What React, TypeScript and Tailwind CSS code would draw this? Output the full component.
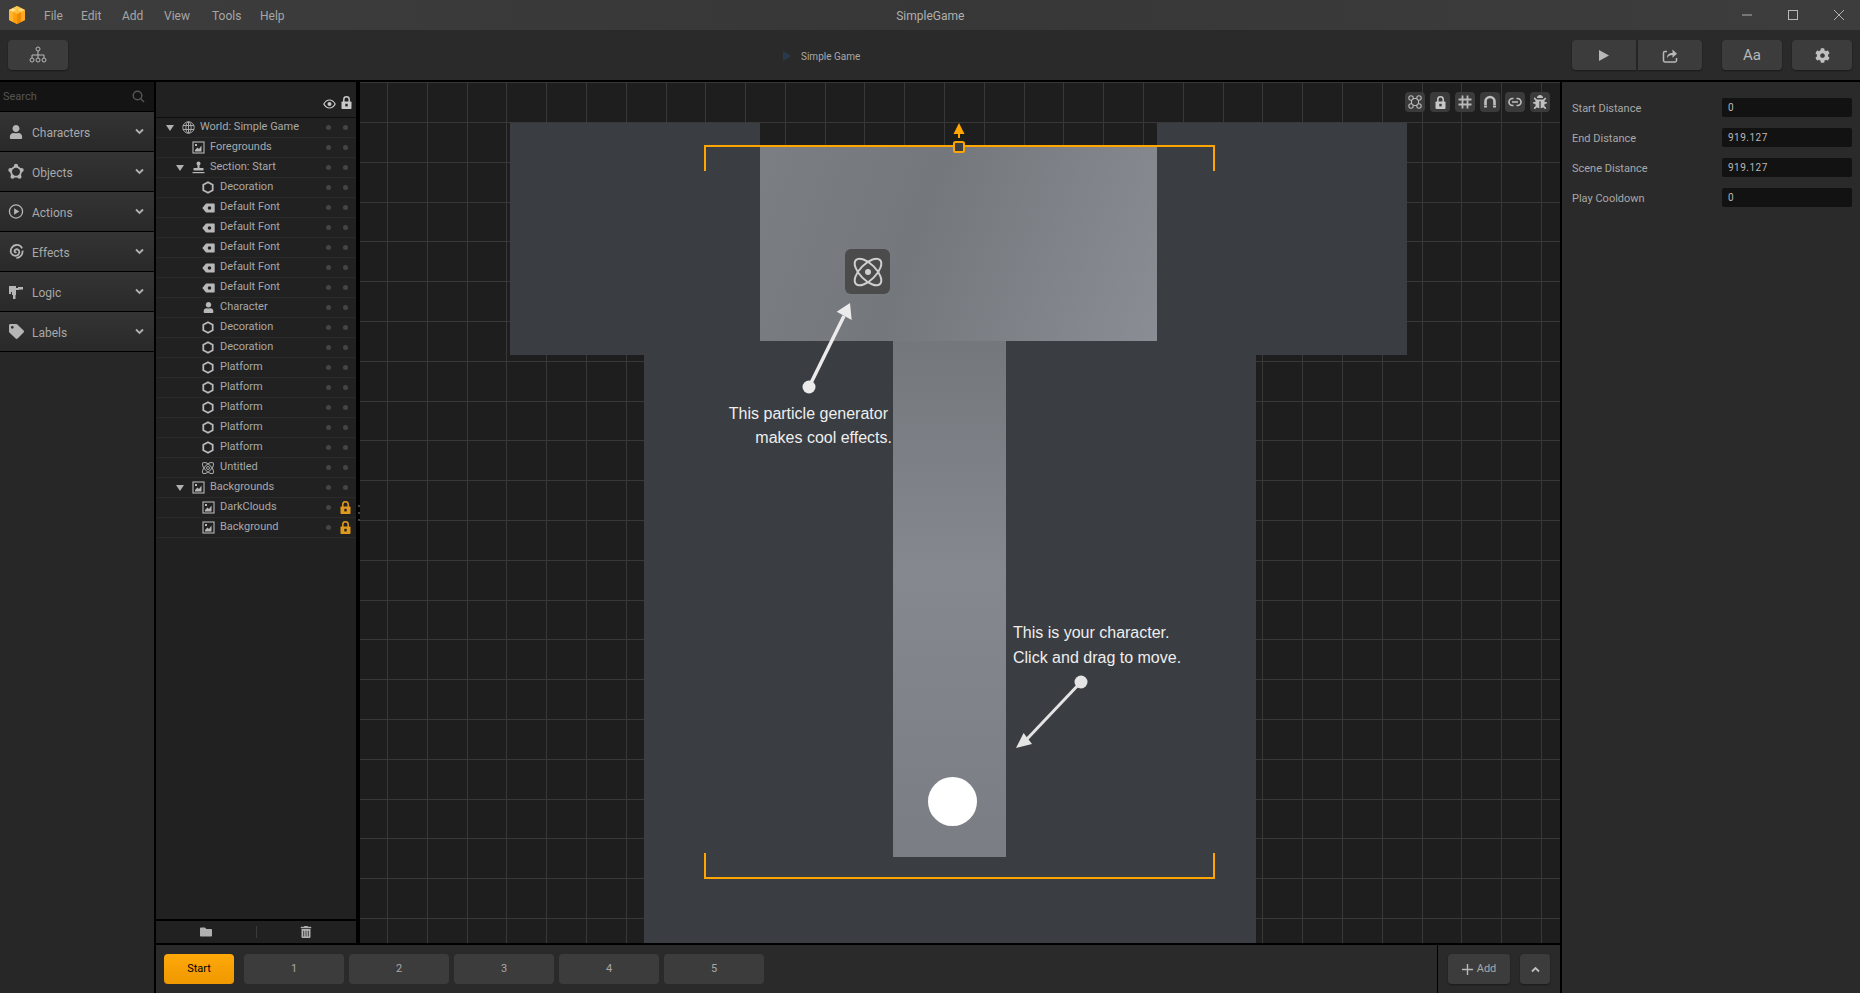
import React from "react";
import { FaCog, FaBug, FaUser, FaTag, FaTrashAlt, FaFolder } from "react-icons/fa";

const Logo = () => (
  <svg width="18" height="20" viewBox="0 0 18 20" className="shrink-0">
    <polygon points="1,5 9,1 17,5 17,15 9,19 1,15" fill="#f59a12" />
    <polygon points="1,5 5,7 5,17 1,15" fill="#ffb52e" />
    <polygon points="5,7 9,9 9,19 5,17" fill="#ff9f0a" />
    <polygon points="9,9 13,7 13,17 9,19" fill="#f08a00" />
    <polygon points="13,7 17,5 17,15 13,17" fill="#ffa826" />
    <polygon points="1,5 5,3 9,5 5,7" fill="#ffe08a" />
    <polygon points="5,3 9,1 13,3 9,5" fill="#ffc94d" />
    <polygon points="9,5 13,3 17,5 13,7" fill="#ffd873" />
    <polygon points="5,7 9,5 13,7 9,9" fill="#ffbe3a" />
  </svg>
);

const TreeIcon = () => (
  <svg width="18" height="18" viewBox="0 0 18 18" fill="none" stroke="#b8b8b8" strokeWidth="1">
    <circle cx="9" cy="3" r="2" />
    <path d="M9 5v4M3 12V9h12v3M9 9v3" />
    <circle cx="3" cy="14" r="2" />
    <circle cx="9" cy="14" r="2" />
    <circle cx="15" cy="14" r="2" />
  </svg>
);

const ObjectsIcon = () => (
  <svg width="17" height="17" viewBox="0 0 17 17" fill="none">
    <polygon points="8.5,2.5 14.5,7 12.2,14 4.8,14 2.5,7" stroke="#b5b5b5" strokeWidth="2" />
    <circle cx="8.5" cy="2.5" r="2.2" fill="#b5b5b5" />
    <circle cx="14.5" cy="7" r="2.2" fill="#b5b5b5" />
    <circle cx="12.2" cy="14" r="2.2" fill="#b5b5b5" />
    <circle cx="4.8" cy="14" r="2.2" fill="#b5b5b5" />
    <circle cx="2.5" cy="7" r="2.2" fill="#b5b5b5" />
  </svg>
);

const ActionsIcon = () => (
  <svg width="17" height="17" viewBox="0 0 17 17" fill="none">
    <circle cx="8.5" cy="8.5" r="7" stroke="#b5b5b5" strokeWidth="1.4" />
    <polygon points="6.5,5 12,8.5 6.5,12" fill="#b5b5b5" />
  </svg>
);

const SpiralIcon = () => (
  <svg width="17" height="17" viewBox="0 0 17 17" fill="none" stroke="#b5b5b5" strokeWidth="1.9">
    <path d="M9 9.2c-.9.7-2.3-.1-2-1.5.3-1.5 2.5-2.2 4-.9 1.700 1.500 1.300 4.500-1 5.700-2.700 1.400-6.300-.2-7-3.300C2.300 5.500 5 2 8.500 1.600c2.800-.3 5.400 1.200 6.500 3.600" />
    <path d="M15.500 7.500c.3 3.800-2 7.300-6.500 8" />
  </svg>
);

const LogicIcon = () => (
  <svg width="16" height="17" viewBox="0 0 16 17" fill="#b5b5b5">
    <rect x="1" y="3" width="7" height="6" />
    <rect x="1" y="5" width="10" height="2" />
    <rect x="10" y="4" width="5" height="2.600" />
    <rect x="4" y="9" width="4" height="3" />
    <rect x="5" y="12" width="2.500" height="4" />
    <rect x="1" y="9" width="2" height="2" />
  </svg>
);

const SearchIcon = () => (
  <svg width="13" height="13" viewBox="0 0 13 13" fill="none" stroke="#555555" strokeWidth="1.500">
    <circle cx="5.500" cy="5.500" r="4.300" />
    <path d="M8.700 8.700 12 12" />
  </svg>
);

const Chevron = () => (
  <svg width="9" height="7" viewBox="0 0 9 7" fill="none" stroke="#b0b0b0" strokeWidth="1.800">
    <path d="M1 1.500 4.500 5 8 1.500" />
  </svg>
);

const EyeIcon = () => (
  <svg width="13" height="10" viewBox="0 0 13 10" fill="none">
    <path d="M.8 5C2.500 2 4.300 1 6.500 1s4 1 5.700 4c-1.700 3-3.500 4-5.700 4S2.500 8 .8 5Z" stroke="#c8c8c8" strokeWidth="1.200" />
    <circle cx="6.500" cy="5" r="2" fill="#c8c8c8" />
  </svg>
);

const LockIcon = ({ color, hole }: { color: string; hole: string }) => (
  <svg width="11" height="13" viewBox="0 0 11 13" fill="none">
    <path d="M2.800 6V3.500a2.700 2.700 0 0 1 5.400 0V6" stroke={color} strokeWidth="1.500" />
    <rect x=".5" y="5.500" width="10" height="7.500" rx=".8" fill={color} />
    <rect x="4.300" y="7.800" width="2.400" height="2.600" fill={hole} />
  </svg>
);

const GlobeIcon = () => (
  <svg width="13" height="13" viewBox="0 0 13 13" fill="none" stroke="#a8a8a8" strokeWidth="1">
    <circle cx="6.500" cy="6.500" r="5.700" />
    <ellipse cx="6.500" cy="6.500" rx="2.600" ry="5.700" />
    <path d="M1 4.500h11M1 8.500h11M6.500 1v11" />
  </svg>
);

const ImageIcon = () => (
  <svg width="13" height="13" viewBox="0 0 13 13" fill="none">
    <rect x="1" y="1" width="11" height="11" stroke="#b8b8b8" strokeWidth="1.100" />
    <path d="M3 10.500V9l2.500-2.500L7 8l2.500-3.500v6Z" fill="#b8b8b8" />
    <rect x="3" y="3" width="2" height="2" fill="#b8b8b8" />
  </svg>
);

const StampIcon = () => (
  <svg width="13" height="13" viewBox="0 0 13 13" fill="#b8b8b8">
    <circle cx="6.500" cy="2.500" r="2" />
    <rect x="5.500" y="3.500" width="2" height="4" />
    <rect x="1.500" y="7" width="10" height="2.500" rx=".5" />
    <rect x=".5" y="11" width="12" height="1.200" />
  </svg>
);

const HexIcon = () => (
  <svg width="12" height="13" viewBox="0 0 12 13" fill="none">
    <polygon points="6,1.200 10.700,3.800 10.700,9.200 6,11.800 1.300,9.200 1.300,3.800" stroke="#b8b8b8" strokeWidth="1.800" />
  </svg>
);

const FontTagIcon = () => (
  <svg width="13" height="10" viewBox="0 0 13 10">
    <path fillRule="evenodd" d="M4 .5h8a.7.700 0 0 1 .7.700v7.600a.7.700 0 0 1-.7.700H4L.3 5Zm3.500 2.700a1.800 1.800 0 1 0 0 3.600 1.800 1.800 0 0 0 0-3.600Z" fill="#b8b8b8" />
  </svg>
);

const AtomSmall = () => (
  <svg width="14" height="14" viewBox="0 0 14 14" fill="none" stroke="#a8a8a8" strokeWidth="1">
    <ellipse cx="7" cy="7" rx="7.200" ry="3.200" transform="rotate(45 7 7)" />
    <ellipse cx="7" cy="7" rx="7.200" ry="3.200" transform="rotate(-45 7 7)" />
    <circle cx="7" cy="7" r="1.500" />
  </svg>
);

const PersonSmall = () => <FaUser size={11} color="#b8b8b8" />;

const Triangle = () => (
  <svg width="8" height="6" viewBox="0 0 8 6" className="shrink-0">
    <polygon points="0,0 8,0 4,6" fill="#b0b0b0" />
  </svg>
);

const ShareIcon = () => (
  <svg width="16" height="15" viewBox="0 0 16 15" fill="none">
    <path d="M5 3.500H3a1.500 1.500 0 0 0-1.500 1.500v7.500A1.500 1.500 0 0 0 3 14h10a1.500 1.500 0 0 0 1.500-1.500V10" stroke="#b8b8b8" strokeWidth="1.500" />
    <path d="M5 10c0-3.200 2-5 5.500-5V1.500L15 5.700l-4.500 4V7C8 7 6.200 8 5 10Z" fill="#b8b8b8" />
  </svg>
);

const NodesTool = () => (
  <svg width="14" height="14" viewBox="0 0 14 14" fill="none" stroke="#b8b8b8" strokeWidth="1.100">
    <circle cx="3" cy="3" r="2.200" />
    <circle cx="11" cy="3" r="2.200" />
    <circle cx="3" cy="11" r="2.200" />
    <circle cx="11" cy="11" r="2.200" />
    <path d="M5 3.500h4M5 10.500h4M3.500 5v4M10.500 5v4" />
  </svg>
);

const HashTool = () => (
  <svg width="14" height="14" viewBox="0 0 14 14" fill="none" stroke="#b8b8b8" strokeWidth="1.800">
    <path d="M4.500 .5v13M9.500 .5v13M.5 4.500h13M.5 9.500h13" />
  </svg>
);

const MagnetTool = () => (
  <svg width="14" height="14" viewBox="0 0 14 14" fill="none">
    <path d="M2.500 10V6.500a4.500 4.500 0 0 1 9 0V10" stroke="#c0c0c0" strokeWidth="2.600" />
    <path d="M1 11.500h3M10 11.500h3" stroke="#c0c0c0" strokeWidth="2" />
  </svg>
);

const LinkTool = () => (
  <svg width="14" height="10" viewBox="0 0 14 10" fill="none" stroke="#c0c0c0" strokeWidth="1.600">
    <path d="M5.500 1.500H4.500a3.500 3.500 0 0 0 0 7h1M8.500 1.500h1a3.500 3.500 0 0 1 0 7h-1M4 5h6" />
  </svg>
);

const ToolBtn = ({ children }: { children: React.ReactNode }) => (
  <div className="w-[20px] h-[20px] rounded-[4px] bg-[#3b3b3b] flex items-center justify-center">{children}</div>
);

const rows: { d: number; arrow?: boolean; icon: React.ReactNode; label: string; locked?: boolean }[] = [
  { d: 0, arrow: true, icon: <GlobeIcon />, label: "World: Simple Game" },
  { d: 1, icon: <ImageIcon />, label: "Foregrounds" },
  { d: 1, arrow: true, icon: <StampIcon />, label: "Section: Start" },
  { d: 2, icon: <HexIcon />, label: "Decoration" },
  { d: 2, icon: <FontTagIcon />, label: "Default Font" },
  { d: 2, icon: <FontTagIcon />, label: "Default Font" },
  { d: 2, icon: <FontTagIcon />, label: "Default Font" },
  { d: 2, icon: <FontTagIcon />, label: "Default Font" },
  { d: 2, icon: <FontTagIcon />, label: "Default Font" },
  { d: 2, icon: <PersonSmall />, label: "Character" },
  { d: 2, icon: <HexIcon />, label: "Decoration" },
  { d: 2, icon: <HexIcon />, label: "Decoration" },
  { d: 2, icon: <HexIcon />, label: "Platform" },
  { d: 2, icon: <HexIcon />, label: "Platform" },
  { d: 2, icon: <HexIcon />, label: "Platform" },
  { d: 2, icon: <HexIcon />, label: "Platform" },
  { d: 2, icon: <HexIcon />, label: "Platform" },
  { d: 2, icon: <AtomSmall />, label: "Untitled" },
  { d: 1, arrow: true, icon: <ImageIcon />, label: "Backgrounds" },
  { d: 2, icon: <ImageIcon />, label: "DarkClouds", locked: true },
  { d: 2, icon: <ImageIcon />, label: "Background", locked: true },
];

const indent = ["pl-[10px]", "pl-[20px]", "pl-[30px]"];

const palette: { icon: React.ReactNode; label: string }[] = [
  { icon: <FaUser size={14} color="#b5b5b5" />, label: "Characters" },
  { icon: <ObjectsIcon />, label: "Objects" },
  { icon: <ActionsIcon />, label: "Actions" },
  { icon: <SpiralIcon />, label: "Effects" },
  { icon: <LogicIcon />, label: "Logic" },
  { icon: <FaTag size={15} color="#b5b5b5" />, label: "Labels" },
];

const props = [
  ["Start Distance", "0"],
  ["End Distance", "919.127"],
  ["Scene Distance", "919.127"],
  ["Play Cooldown", "0"],
];

const vLines = Array.from({ length: 31 }, (_, k) => Math.round(27 + 39.79 * k));
const hLines = [0, ...Array.from({ length: 21 }, (_, k) => Math.round(40 + 39.8 * k))];

const BTN = "bg-[#3c3c3c] rounded-[4px] shadow-[0_1px_2px_rgba(0,0,0,0.4)] flex items-center justify-center";

function Canvas() {
  return (
    <div className="relative flex-1 bg-[#1e1e1e] overflow-hidden">
      <svg className="absolute inset-0" width="1200" height="861" shapeRendering="crispEdges">
        {vLines.map((x) => (
          <rect key={x} x={x} y="0" width="1" height="861" fill="#383838" />
        ))}
        {hLines.map((y) => (
          <rect key={y} x="0" y={y} width="1200" height="1" fill="#383838" />
        ))}
      </svg>

      <div className="absolute left-[150px] top-[41px] w-[250px] h-[24px] bg-[#3a3d42]" />
      <div className="absolute left-[797px] top-[41px] w-[250px] h-[24px] bg-[#3a3d42]" />
      <div className="absolute left-[150px] top-[65px] w-[897px] h-[208px] bg-[#3a3d42]" />
      <div className="absolute left-[284px] top-[273px] w-[612px] h-[588px] bg-[#3a3d42]" />
      <div className="absolute left-[400px] top-[65px] w-[397px] h-[194px] bg-[linear-gradient(110deg,#7b7e83_0%,#74777c_40%,#8a8d93_100%)]" />
      <div className="absolute left-[533px] top-[259px] w-[113px] h-[516px] bg-[linear-gradient(180deg,#74787d_0%,#85888e_45%,#7a7e84_100%)]" />

      <div className="absolute left-[485px] top-[167px] w-[45px] h-[45px] rounded-[6px] bg-[#4b4b4b] flex items-center justify-center">
        <svg width="30" height="30" viewBox="0 0 30 30" fill="none" stroke="#cfcfcf" strokeWidth="2">
          <ellipse cx="15" cy="15" rx="17" ry="8" transform="rotate(45 15 15)" />
          <ellipse cx="15" cy="15" rx="17" ry="8" transform="rotate(-45 15 15)" />
          <circle cx="15" cy="15" r="3" fill="#cfcfcf" stroke="none" />
        </svg>
      </div>

      <div className="absolute left-[568px] top-[695px] w-[49px] h-[49px] rounded-full bg-white" />

      <svg className="absolute inset-0" width="1200" height="861" fill="none">
        <path d="M345 89V64h509v25M345 771v25h509v-25" stroke="#ffa500" strokeWidth="2" />
        <rect x="594" y="60" width="10" height="10" rx="1.500" fill="#3a3d42" stroke="#ffa500" strokeWidth="2" />
        <path d="M599 51v5" stroke="#ffa500" strokeWidth="2" />
        <polygon points="599,41 604.500,52 593.500,52" fill="#ffa500" />
        <path d="M449 305 484 234" stroke="#ebebeb" strokeWidth="3.500" />
        <circle cx="449" cy="305" r="6.500" fill="#ebebeb" />
        <polygon points="490,221 476.700,229.700 491.700,238" fill="#ebebeb" />
        <path d="M721 600 667 657" stroke="#e4e4e4" strokeWidth="3" />
        <circle cx="721" cy="600" r="6.500" fill="#e4e4e4" />
        <polygon points="656,666 663.600,651 672,662" fill="#e4e4e4" />
      </svg>

      <div className="absolute left-[368px] top-[322px] w-[160px] text-right text-[16px] leading-[20px] text-[#eeeeee] font-['Liberation_Sans',sans-serif] whitespace-nowrap">This particle generator</div>
      <div className="absolute left-[372px] top-[346px] w-[160px] text-right text-[16px] leading-[20px] text-[#eeeeee] font-['Liberation_Sans',sans-serif] whitespace-nowrap">makes cool effects.</div>
      <div className="absolute left-[653px] top-[541px] text-[16px] leading-[20px] text-[#eeeeee] font-['Liberation_Sans',sans-serif] whitespace-nowrap">This is your character.</div>
      <div className="absolute left-[653px] top-[566px] text-[16px] leading-[20px] text-[#eeeeee] font-['Liberation_Sans',sans-serif] whitespace-nowrap">Click and drag to move.</div>

      <div className="absolute right-[10px] top-[10px] flex gap-[5px]">
        <ToolBtn><NodesTool /></ToolBtn>
        <ToolBtn><LockIcon color="#c8c8c8" hole="#3b3b3b" /></ToolBtn>
        <ToolBtn><HashTool /></ToolBtn>
        <ToolBtn><MagnetTool /></ToolBtn>
        <ToolBtn><LinkTool /></ToolBtn>
        <ToolBtn><FaBug size={14} color="#c0c0c0" /></ToolBtn>
      </div>
    </div>
  );
}

export default function App() {
  return (
    <div className="w-[1860px] h-[993px] flex flex-col bg-black overflow-hidden font-['Roboto',sans-serif] text-[11px] text-[#a8a8a8]">
      {/* Title bar */}
      <div className="h-[30px] shrink-0 bg-[linear-gradient(90deg,#3d3d3d,#373737_50%,#3d3d3d)] flex items-center">
        <div className="pl-[8px] w-[44px]"><Logo /></div>
        <div className="flex text-[12px] text-[#a6a6a6] pt-[1px]">
          <span className="w-[37px]">File</span>
          <span className="w-[41px]">Edit</span>
          <span className="w-[42px]">Add</span>
          <span className="w-[48px]">View</span>
          <span className="w-[48px]">Tools</span>
          <span>Help</span>
        </div>
        <div className="flex-1 text-center text-[12px] text-[#b0b0b0] pr-[166px] pt-[1px]">SimpleGame</div>
        <div className="flex items-center gap-[36px] pr-[16px]">
          <svg width="10" height="10" viewBox="0 0 10 10"><path d="M0 5h10" stroke="#b0b0b0" strokeWidth="1" /></svg>
          <svg width="10" height="10" viewBox="0 0 10 10" fill="none"><rect x=".5" y=".5" width="9" height="9" stroke="#b8b8b8" strokeWidth="1" /></svg>
          <svg width="10" height="10" viewBox="0 0 10 10"><path d="M0 0 10 10M10 0 0 10" stroke="#b0b0b0" strokeWidth="1" /></svg>
        </div>
      </div>

      {/* Toolbar */}
      <div className="h-[50px] shrink-0 bg-[#2a2a2a] flex items-center px-[8px]">
        <div className={`w-[60px] h-[30px] ${BTN}`}><TreeIcon /></div>
        <div className="flex-1 flex items-center pl-[715px] gap-[10px] pt-[2px]">
          <svg width="8" height="10" viewBox="0 0 8 10"><polygon points="0,0 8,5 0,10" fill="#2a3a4c" /></svg>
          <span className="text-[#a8a8a8] text-[10px]">Simple Game</span>
        </div>
        <div className="flex items-center">
          <div className={`w-[64px] h-[30px] rounded-r-none ${BTN}`}>
            <svg width="12" height="13" viewBox="0 0 12 13"><polygon points="1,1 11,6.500 1,12" fill="#b8b8b8" /></svg>
          </div>
          <div className={`ml-[2px] w-[64px] h-[30px] rounded-l-none ${BTN}`}><ShareIcon /></div>
          <div className={`ml-[20px] w-[60px] h-[30px] text-[15px] text-[#b8b8b8] ${BTN}`}>Aa</div>
          <div className={`ml-[10px] w-[60px] h-[30px] ${BTN}`}><FaCog size={15} color="#c0c0c0" /></div>
        </div>
      </div>

      {/* Body */}
      <div className="flex-1 min-h-0 flex pt-[2px] bg-black">
        {/* Palette */}
        <div className="w-[156px] shrink-0 border-r-2 border-black bg-[#272727] flex flex-col">
          <div className="h-[30px] shrink-0 bg-[#141414] border-b border-black flex items-center justify-between pl-[3px] pr-[9px] text-[#555555]">
            <span className="pt-[2px]">Search</span>
            <SearchIcon />
          </div>
          {palette.map((p) => (
            <div key={p.label} className="h-[40px] shrink-0 border-b border-black bg-[linear-gradient(180deg,#343434,#292929)] flex items-center pl-[8px] pr-[10px]">
              <span className="w-[16px] h-[17px] flex items-center justify-center">{p.icon}</span>
              <span className="ml-[8px] flex-1 text-[12px] text-[#a8a8a8] pt-[2px]">{p.label}</span>
              <Chevron />
            </div>
          ))}
        </div>

        {/* Center */}
        <div className="flex-1 min-w-0 flex flex-col border-r-2 border-black">
          <div className="flex-1 min-h-0 flex">
            <div className="w-[200px] shrink-0 bg-[#212121] flex flex-col">
              <div className="h-[36px] shrink-0 border-b border-[#0e0e0e] flex items-end justify-end pb-[8px] pr-[4px] gap-[5px]">
                <EyeIcon />
                <LockIcon color="#c8c8c8" hole="#212121" />
              </div>
              {rows.map((r, i) => (
                <div key={i} className={`h-[20px] shrink-0 border-b border-[#2a2a2a] flex items-center pr-[8px] ${indent[r.d]}`}>
                  <span className="w-[15px] flex items-center">{r.arrow && <Triangle />}</span>
                  <span className="w-[14px] flex items-center justify-center">{r.icon}</span>
                  <span className="ml-[5px] flex-1 whitespace-nowrap">{r.label}</span>
                  <span className="w-[5px] h-[5px] rounded-full bg-[#444444]" />
                  <span className="w-[17px] flex justify-end">
                    {r.locked ? (
                      <span className="w-[11px] flex justify-center -mr-[3px]"><LockIcon color="#e09a20" hole="#212121" /></span>
                    ) : (
                      <span className="w-[5px] h-[5px] rounded-full bg-[#444444]" />
                    )}
                  </span>
                </div>
              ))}
              <div className="flex-1" />
              <div className="h-[24px] shrink-0 border-t-2 border-black flex items-center">
                <div className="flex-1 flex justify-center"><FaFolder size={12} color="#b0b0b0" /></div>
                <div className="w-px h-[12px] bg-[#3a3a3a]" />
                <div className="flex-1 flex justify-center"><FaTrashAlt size={12} color="#b0b0b0" /></div>
              </div>
            </div>
            <div className="w-[4px] shrink-0 bg-black flex flex-col items-center justify-center gap-[5px]">
              <span className="w-[2px] h-[2px] bg-[#444444] ml-[2px]" />
              <span className="w-[2px] h-[2px] bg-[#444444] ml-[2px]" />
              <span className="w-[2px] h-[2px] bg-[#444444] ml-[2px]" />
            </div>
            <Canvas />
          </div>

          {/* Bottom bar */}
          <div className="h-[48px] mt-[2px] shrink-0 bg-[#2a2a2a] flex items-center">
            <div className="flex-1 flex items-center pl-[8px] gap-[5px]">
              <div className="w-[70px] h-[30px] mr-[5px] rounded-[4px] bg-[linear-gradient(180deg,#ffa90a,#ef9800)] text-black text-[11px] flex items-center justify-center">Start</div>
              {[1, 2, 3, 4, 5].map((n) => (
                <div key={n} className="w-[100px] h-[30px] rounded-[4px] bg-[#3c3c3c] flex items-center justify-center text-[#a8a8a8]">{n}</div>
              ))}
            </div>
            <div className="w-[123px] h-full border-l border-black flex items-center pl-[10px] gap-[10px]">
              <div className={`w-[62px] h-[30px] gap-[4px] ${BTN}`}>
                <svg width="11" height="11" viewBox="0 0 11 11"><path d="M5.500 0v11M0 5.500h11" stroke="#b8b8b8" strokeWidth="1.400" /></svg>
                <span className="text-[#a8a8a8]">Add</span>
              </div>
              <div className={`w-[30px] h-[30px] ${BTN}`}>
                <svg width="9" height="7" viewBox="0 0 9 7" fill="none" stroke="#c0c0c0" strokeWidth="1.800"><path d="M1 5.500 4.500 2 8 5.500" /></svg>
              </div>
            </div>
          </div>
        </div>

        {/* Properties */}
        <div className="w-[298px] shrink-0 bg-[#2a2a2a] pt-[16px] pl-[10px] pr-[8px] flex flex-col gap-[11px]">
          {props.map(([k, v]) => (
            <div key={k} className="h-[19px] flex items-center">
              <span className="w-[150px] text-[#a8a8a8] pt-[3px]">{k}</span>
              <span className="flex-1 h-[19px] rounded-[2px] bg-[#121212] pl-[6px] flex items-center text-[10px] tracking-[0.5px] text-[#b8b8b8]">{v}</span>
            </div>
          ))}
        </div>
      </div>
    </div>
  );
}
